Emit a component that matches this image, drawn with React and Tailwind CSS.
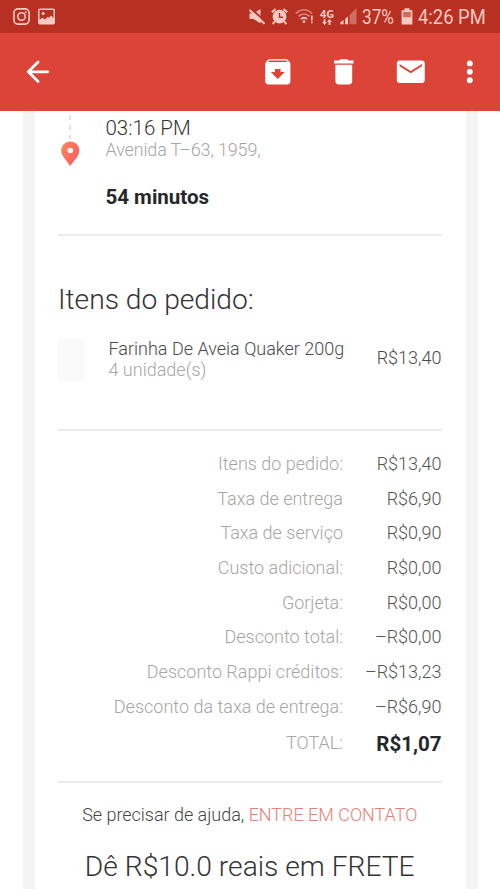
import React from 'react';

const charges = [
  { label: 'Itens do pedido:', value: 'R$13,40' },
  { label: 'Taxa de entrega', value: 'R$6,90' },
  { label: 'Taxa de serviço', value: 'R$0,90' },
  { label: 'Custo adicional:', value: 'R$0,00' },
  { label: 'Gorjeta:', value: 'R$0,00' },
  { label: 'Desconto total:', value: '–R$0,00' },
  { label: 'Desconto Rappi créditos:', value: '–R$13,23' },
  { label: 'Desconto da taxa de entrega:', value: '–R$6,90' },
];

function StatusBar() {
  return (
    <div className="flex h-[33px] shrink-0 items-center bg-[#b83022] pl-[13px] pr-[15px] text-[#f6c9c3]">
      {/* Instagram */}
      <svg className="h-[17px] w-[17px]" viewBox="0 0 17 17" fill="none" stroke="currentColor" strokeWidth="1.6">
        <rect x="0.9" y="0.9" width="15.2" height="15.2" rx="4" />
        <circle cx="8.5" cy="8.5" r="3.7" />
        <circle cx="12.7" cy="4.3" r="1" fill="currentColor" stroke="none" />
      </svg>
      {/* Gallery */}
      <svg className="ml-2 h-[17px] w-[17px]" viewBox="0 0 17 17">
        <rect x="0.8" y="1.2" width="15.4" height="14.6" rx="1" fill="none" stroke="currentColor" strokeWidth="1.5" />
        <path d="M1 12l3.500-2.200 2.500 1.700 2.500-2.500 1.500.8L13 7.500l3 3V16H1z" fill="currentColor" />
        <circle cx="5.2" cy="5.6" r="1.5" fill="currentColor" />
      </svg>

      <div className="ml-auto flex items-center">
        {/* Muted */}
        <svg className="h-[17px] w-[17px]" viewBox="0 0 17 17">
          <path d="M0.500 5.500h4L11.500 1v14.500l-7-4.500h-4z" fill="currentColor" />
          <path d="M1.800 0.500L17 13.800" stroke="#b83022" strokeWidth="2" />
          <path d="M0.500 2L15.600 15.800" stroke="currentColor" strokeWidth="2" />
        </svg>
        {/* Alarm */}
        <svg className="ml-[5px] h-[17px] w-[17px]" viewBox="0 0 17 17" fill="none">
          <circle cx="8.5" cy="8.7" r="6.9" fill="currentColor" />
          <path d="M0.800 4.300L4.600 1M16.200 4.300L12.400 1M3.600 13.500l-1.900 2.600M13.400 13.500l1.900 2.600" stroke="currentColor" strokeWidth="2" />
          <path d="M8.500 4.800v4.400h3.600" stroke="#b83022" strokeWidth="1.4" />
        </svg>
        {/* Wi-Fi */}
        <svg className="ml-[7px] h-[17px] w-[19px]" viewBox="0 0 19 17" fill="none" stroke="currentColor" strokeWidth="1.7">
          <path d="M0.800 5.600C5.500 0.600 12.500 0.600 17.200 5.600" opacity="0.5" />
          <path d="M3.500 8.400c3.200-3.200 7.800-3.200 11 0" opacity="0.6" />
          <path d="M5.900 11.200c1.900-1.800 4.300-1.800 6.200 0" />
          <circle cx="9" cy="13.6" r="1.3" fill="currentColor" stroke="none" />
          <path d="M16.800 7.500v5M16.800 13.600v1.700" />
        </svg>
        {/* Mobile data */}
        <div className="ml-[6px] flex w-[14px] flex-col items-center">
          <span className="font-['Open_Sans'] text-[11px] leading-[11px] font-bold">4G</span>
          <svg className="h-[6px] w-[10px]" viewBox="0 0 10 6" fill="currentColor">
            <path d="M1.600 0h1.800v3h1.500L2.500 6 .1 3h1.500zM6.600 6h1.800V3h1.500L7.500 0 5.100 3h1.500z" />
          </svg>
        </div>
        {/* Signal */}
        <svg className="ml-[6px] h-[17px] w-[17px]" viewBox="0 0 17 17" fill="currentColor">
          <path d="M0.300 16.200v-1.600L3.600 12v4.200zM5.200 16.200v-5.400L8 8.400v7.800z" />
          <path d="M9.500 16.200V7L16.500 0v16.200z" opacity="0.4" />
        </svg>
        <span className="ml-[5px] w-[35px] text-[20px] leading-[20px]">
          <span className="inline-block origin-left scale-x-[0.86] whitespace-nowrap">37%</span>
        </span>
        {/* Battery */}
        <svg className="ml-[4px] h-[17px] w-[12px]" viewBox="0 0 12 17">
          <path d="M3.500 0.300h5v1.900h2.900v14.300H0.600V2.200h2.900z" fill="currentColor" />
          <path d="M2.200 4h7.600v5.200H2.200z" fill="#d0685d" />
        </svg>
        <span className="ml-[5px] w-[67px] text-[20px] leading-[20px]">
          <span className="inline-block origin-left scale-x-[0.92] whitespace-nowrap">4:26 PM</span>
        </span>
      </div>
    </div>
  );
}

function Toolbar() {
  return (
    <div className="flex h-[78px] shrink-0 items-center bg-[#dc4437] pl-[21px] pr-[14px] text-white">
      <svg className="h-[33.6px] w-[33.6px]" viewBox="0 0 24 24" fill="none" stroke="currentColor" strokeWidth="2" strokeLinecap="round" strokeLinejoin="round">
        <path d="M19.200 12H5.200M12.200 5l-7 7 7 7" />
      </svg>
      <div className="ml-auto flex items-center gap-[33px]">
        <svg className="h-[33.6px] w-[33.6px]" viewBox="0 0 24 24" fill="currentColor">
          <path d="M20.540 5.230l-1.390-1.680C18.880 3.210 18.470 3 18 3H6c-.47 0-.88.21-1.160.55L3.460 5.230C3.170 5.570 3 6.020 3 6.500V19c0 1.100.9 2 2 2h14c1.100 0 2-.9 2-2V6.500c0-.48-.17-.93-.46-1.270zM12 17.200L7 12.200H10V10h4v2.200h3L12 17.200zM5.120 5l.81-1h12l.94 1H5.120z" />
        </svg>
        <svg className="h-[33.6px] w-[33.6px]" viewBox="0 0 24 24" fill="currentColor">
          <path d="M6 19c0 1.100.9 2 2 2h8c1.100 0 2-.9 2-2V7H6v12zM19 4h-3.500l-1-1h-5l-1 1H5v2h14V4z" />
        </svg>
        <svg className="h-[33.6px] w-[33.6px]" viewBox="0 0 24 24" fill="currentColor">
          <path d="M20 4H4c-1.100 0-1.990.9-1.990 2L2 18c0 1.100.9 2 2 2h16c1.100 0 2-.9 2-2V6c0-1.100-.9-2-2-2zm0 4l-8 5-8-5V6.500l8 5 8-5V8z" />
        </svg>
        <svg className="-mr-px -ml-[7px] h-[33.6px] w-[33.6px]" viewBox="0 0 24 24" fill="currentColor">
          <circle cx="12" cy="6" r="2.1" />
          <circle cx="12" cy="12" r="2.1" />
          <circle cx="12" cy="18" r="2.1" />
        </svg>
      </div>
    </div>
  );
}

function Arrival() {
  return (
    <div className="flex h-[125px] shrink-0 border-b-2 border-[#ebebeb]">
      <svg className="h-[56px] w-[25px]" viewBox="0 0 25 56">
        <defs>
          <linearGradient id="pin" x1="0" y1="0" x2="1" y2="1">
            <stop offset="0" stopColor="#ff8a5c" />
            <stop offset="1" stopColor="#f9555f" />
          </linearGradient>
        </defs>
        <path d="M12 4v5M12 14v5M12 24v4" stroke="#e2e0e2" strokeWidth="2" />
        <path d="M12.300 30.500c-5.100 0-9.100 4-9.100 9 0 6.200 6.400 10.500 9.100 15.800 2.700-5.300 9.100-9.600 9.100-15.800 0-5-4-9-9.100-9z" fill="url(#pin)" />
        <circle cx="12.300" cy="39.500" r="2.800" fill="#fff" />
      </svg>
      <div className="ml-[22.5px] pt-[5px] whitespace-nowrap">
        <p className="text-[20.5px] leading-[24px] font-light text-[#333]">03:16 PM</p>
        <p className="text-[18px] leading-[20px] font-light tracking-[-0.15px] text-[#a6a6a6]">Avenida T–63, 1959,</p>
        <p className="mt-[25px] text-[20.5px] leading-[24px] font-bold text-[#25282b]">54 minutos</p>
      </div>
    </div>
  );
}

function App() {
  return (
    <div className="flex h-[889px] w-[500px] flex-col overflow-hidden bg-white font-[Roboto,sans-serif]">
      <StatusBar />
      <Toolbar />
      <div className="mr-[22px] ml-[22.5px] flex flex-1 flex-col border-x-[12.5px] border-[#f4f4f4] pr-[24.5px] pl-[23.5px]">
        <Arrival />

        <h2 className="mt-[46px] text-[28.2px] leading-[36px] font-light whitespace-nowrap text-[#333]">Itens do pedido:</h2>

        <div className="mt-[18px] flex h-[95px] shrink-0 border-b-2 border-[#ebebeb] whitespace-nowrap">
          <div className="mt-[3px] h-[42px] w-[26.5px] bg-[#fafafa]" />
          <div className="ml-[24px] pt-[2px] text-[18px] font-light">
            <p className="leading-[21px] text-[#4a4a4a]">Farinha De Aveia Quaker 200g</p>
            <p className="leading-[21px] text-[#a6a6a6]">4 unidade(s)</p>
          </div>
          <p className="mt-[12px] ml-auto text-[18px] leading-[20px] font-light text-[#4a4a4a]">R$13,40</p>
        </div>

        <div className="flex h-[352px] shrink-0 flex-col border-b-2 border-[#ebebeb] pt-[15px] text-[18px] font-light whitespace-nowrap">
          {charges.map((charge) => (
            <div key={charge.label} className="flex h-[34.7px] items-center">
              <p className="w-[285px] text-right text-[#a6a6a6]">{charge.label}</p>
              <p className="ml-auto text-[#555]">{charge.value}</p>
            </div>
          ))}
          <div className="flex h-[38px] items-center">
            <p className="w-[285px] text-right text-[#a6a6a6]">TOTAL:</p>
            <p className="mt-[3px] ml-auto text-[20.5px] font-bold text-[#25282b]">R$1,07</p>
          </div>
        </div>

        <p className="mt-[20px] text-center text-[18px] leading-[24px] font-light tracking-[-0.02px] whitespace-nowrap text-[#444]">
          Se precisar de ajuda, <span className="text-[#e98074]">ENTRE EM CONTATO</span>
        </p>
        <p className="mt-[22px] text-center text-[28.2px] leading-[36px] font-light whitespace-nowrap text-[#333]">
          Dê R$10.0 reais em FRETE
        </p>
      </div>
    </div>
  );
}

export default App;
